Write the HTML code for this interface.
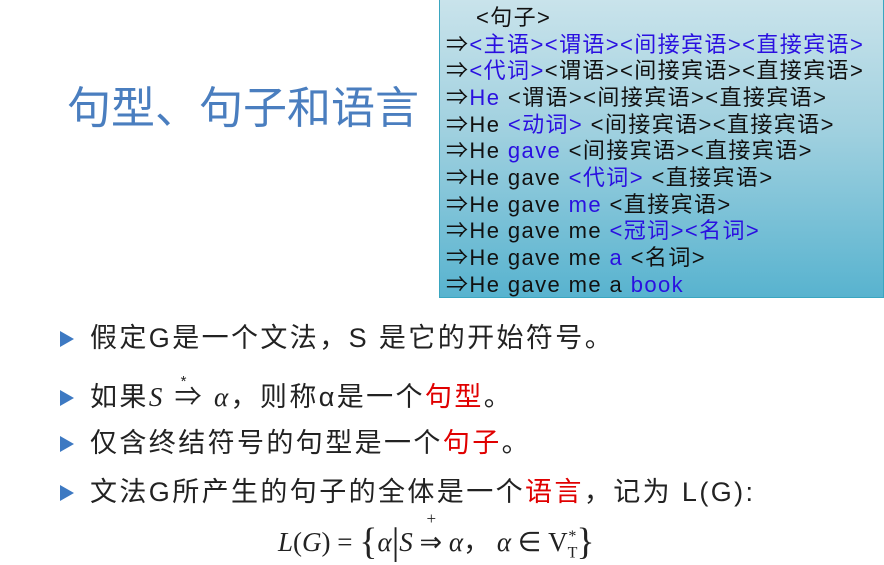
<!DOCTYPE html>
<html><head><meta charset="utf-8"><style>
html,body{margin:0;padding:0;background:#fff;width:884px;height:565px;overflow:hidden;position:relative;font-family:"Liberation Sans","Noto Sans CJK SC",sans-serif}
.title{position:absolute;left:67px;top:72px;font-size:44px;color:#4a7ebf;white-space:nowrap}
.box{position:absolute;left:439px;top:0;width:443px;height:297px;border:1px solid #3aa6c0;border-top:none;background:linear-gradient(#c9e3eb,#9fd0df 45%,#58b3cf)}
.ln{position:absolute;left:6px;font-size:22px;line-height:26px;white-space:nowrap;color:#111;letter-spacing:1.4px}
.b{color:#2a10e0}
.bl{position:absolute;left:90px;font-size:27px;color:#222;white-space:nowrap;line-height:32px;letter-spacing:2.4px}
.tri{position:absolute;left:60px;width:0;height:0;border-top:8px solid transparent;border-bottom:8px solid transparent;border-left:14px solid #3d79c2}
.r{color:#e00000}
.m{font-family:"Liberation Serif",serif;font-style:italic}
</style></head><body>
<div class="title">句型、句子和语言</div>
<div class="box">
<div class="ln" style="top:5px;left:36px">&lt;句子&gt;</div>
<div class="ln" style="top:32px">⇒<span class="b">&lt;主语&gt;&lt;谓语&gt;&lt;间接宾语&gt;&lt;直接宾语&gt;</span></div>
<div class="ln" style="top:58px">⇒<span class="b">&lt;代词&gt;</span>&lt;谓语&gt;&lt;间接宾语&gt;&lt;直接宾语&gt;</div>
<div class="ln" style="top:85px">⇒<span class="b">He</span> &lt;谓语&gt;&lt;间接宾语&gt;&lt;直接宾语&gt;</div>
<div class="ln" style="top:112px">⇒He <span class="b">&lt;动词&gt;</span> &lt;间接宾语&gt;&lt;直接宾语&gt;</div>
<div class="ln" style="top:138px">⇒He <span class="b">gave</span> &lt;间接宾语&gt;&lt;直接宾语&gt;</div>
<div class="ln" style="top:165px">⇒He gave <span class="b">&lt;代词&gt;</span> &lt;直接宾语&gt;</div>
<div class="ln" style="top:192px">⇒He gave <span class="b">me</span> &lt;直接宾语&gt;</div>
<div class="ln" style="top:218px">⇒He gave me <span class="b">&lt;冠词&gt;&lt;名词&gt;</span></div>
<div class="ln" style="top:245px">⇒He gave me <span class="b">a</span> &lt;名词&gt;</div>
<div class="ln" style="top:272px">⇒He gave me a <span class="b">book</span></div>
</div>
<div class="tri" style="top:331px"></div><div class="bl" style="top:322px">假定G是一个文法，S 是它的开始符号。</div>
<div class="tri" style="top:390px"></div><div class="bl" style="top:381px">如果<span class="m">S</span> <span style="position:relative">⇒<span style="position:absolute;left:6px;top:-16px;font-size:15px">*</span></span> <span class="m">α</span>，则称α是一个<span class="r">句型</span>。</div>
<div class="tri" style="top:436px"></div><div class="bl" style="top:427px">仅含终结符号的句型是一个<span class="r">句子</span>。</div>
<div class="tri" style="top:485px"></div><div class="bl" style="top:476px">文法G所产生的句子的全体是一个<span class="r">语言</span>，记为 L(G):</div>
<div style="position:absolute;left:278px;top:520px;font-size:27px;font-family:'Liberation Serif',serif;white-space:nowrap;color:#222"><i>L</i>(<i>G</i>) = <span style="font-size:38px;vertical-align:-3px">{</span><i>α</i><span style="font-size:38px;vertical-align:-3px">|</span><i>S</i> <span style="position:relative">⇒<span style="position:absolute;left:7px;top:-18px;font-size:17px">+</span></span> <i>α</i>，&nbsp;<i>α</i> ∈ V<sub style="font-size:16px">T</sub><sup style="font-size:16px;margin-left:-9px">*</sup><span style="font-size:38px;vertical-align:-3px">}</span></div>
</body></html>
